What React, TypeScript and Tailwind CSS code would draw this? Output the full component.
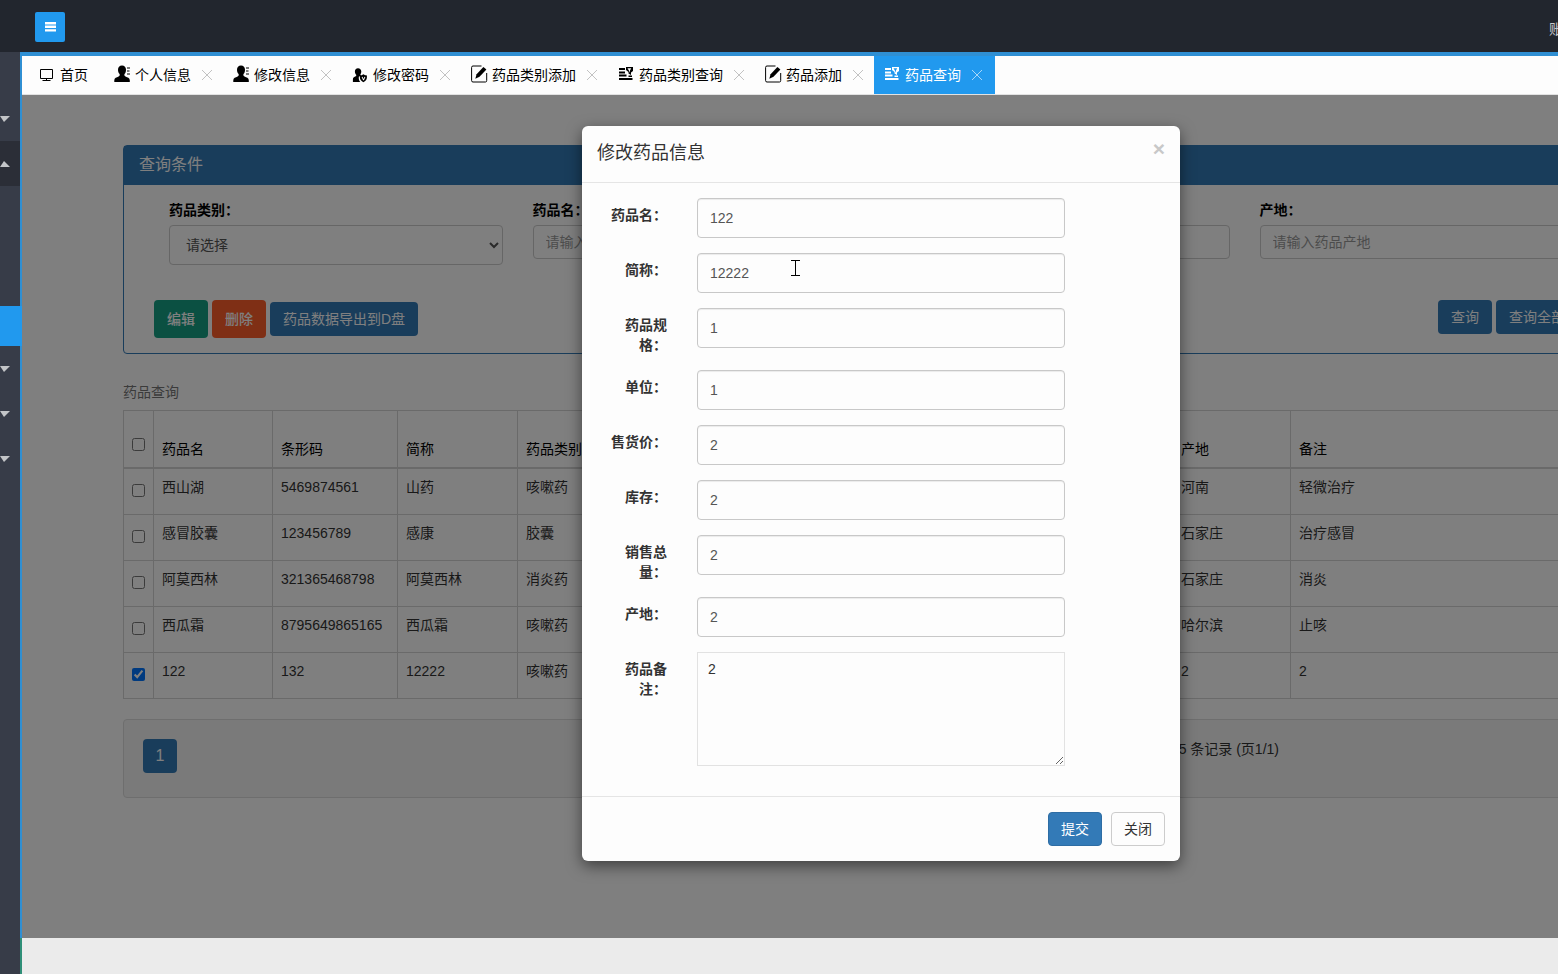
import { useState } from "react";
import type { ReactNode } from "react";

type IconProps = { className?: string };

function MonitorIcon() {
  return (
    <svg width="14" height="14" viewBox="0 0 14 14" fill="none" stroke="currentColor" aria-hidden="true">
      <path d="M.5 1.500h12v9H.5zM6.500 10.500v2M2.500 12.500h8" />
    </svg>
  );
}

function UserIcon({ className }: IconProps) {
  return (
    <svg width="18" height="18" viewBox="0 0 18 18" fill="currentColor" className={className} aria-hidden="true">
      <path d="M8 .5c-2.500 0-4 1.700-4 4.200 0 1.800.6 3.400 1.600 4.400.3 1.200.1 1.900-1 2.400C2.600 12.400.3 13 .3 15.200V17h15.500v-1.800c0-2.200-2.300-2.800-4.300-3.700-1.100-.5-1.300-1.200-1-2.400 1-1 1.500-2.600 1.500-4.400C12 2.200 10.500.5 8 .5z" />
      <path d="M13 2.500h3v1h-3zM13 5.500h2.500v1H13zM13 8.500h3v1h-3z" />
    </svg>
  );
}

function UserShieldIcon({ className }: IconProps) {
  return (
    <svg width="18" height="18" viewBox="0 0 18 18" fill="currentColor" className={className} aria-hidden="true">
      <path d="M6 3.200c-2 0-3.100 1.400-3.100 3.300 0 1.400.5 2.500 1.300 3.300.2 1-.1 1.400-1 1.800C1.900 12.200.9 12.800.9 14.600V17h7.400c-1.300-1.400-1.700-3-1.500-5.300l2.400-1.100c-.7-.3-.9-.7-.7-1.300.5-.7.800-1.700.8-2.800C9.300 4.600 8 3.200 6 3.200z" />
      <path
        fillRule="evenodd"
        d="M11.400 9.300c1.200.9 2.200 1.100 3.500 1.100v2.200c0 2.200-1.400 3.700-3.500 4.600-2.100-.9-3.500-2.400-3.500-4.600v-2.200c1.300 0 2.300-.2 3.500-1.100zM9.600 12l1.500 3.200h.8l1.500-3.200-.9-.3-1 2.200-1-2.200z"
      />
    </svg>
  );
}

function EditIcon({ className }: IconProps) {
  return (
    <svg width="18" height="18" viewBox="0 0 18 18" fill="none" className={className} aria-hidden="true">
      <path
        d="M10.500 1H2Q.6 1 .6 2.400v13.200Q.6 17 2 17h12.500q1.200 0 1.200-1.400V8"
        stroke="currentColor"
      />
      <path d="M12.400 2l3 2.600-6.900 7.200-4.200 2 1.300-4.600z" fill="currentColor" />
    </svg>
  );
}

function ListFilterIcon({ className }: IconProps) {
  return (
    <svg width="18" height="18" viewBox="0 0 18 18" fill="currentColor" className={className} aria-hidden="true">
      <path d="M1 3h6v2H1zM1 6.500h6v2H1zM1 9.500h7.500v2H1zM1 13h13.500v2H1zM10.500 10.500H14V12h-3.500z" />
      <path fillRule="evenodd" d="M8 2h7v4l-2 1.500v2.500l-2.500-1.500V7L8 5zM9.500 3.200l1.500 2.500 1 2V5.500l1.200-2.300z" />
    </svg>
  );
}

function CloseIcon() {
  return (
    <svg width="12" height="12" viewBox="0 0 12 12" stroke="currentColor" aria-hidden="true">
      <path d="M1 1l10 10M11 1L1 11" />
    </svg>
  );
}

const tabs: { label: string; icon: ReactNode; active?: boolean }[] = [
  { label: "个人信息", icon: <UserIcon /> },
  { label: "修改信息", icon: <UserIcon /> },
  { label: "修改密码", icon: <UserShieldIcon /> },
  { label: "药品类别添加", icon: <EditIcon /> },
  { label: "药品类别查询", icon: <ListFilterIcon /> },
  { label: "药品添加", icon: <EditIcon /> },
  { label: "药品查询", icon: <ListFilterIcon />, active: true },
];

const drugs = [
  { name: "西山湖", code: "5469874561", short: "山药", type: "咳嗽药", origin: "河南", remark: "轻微治疗" },
  { name: "感冒胶囊", code: "123456789", short: "感康", type: "胶囊", origin: "石家庄", remark: "治疗感冒" },
  { name: "阿莫西林", code: "321365468798", short: "阿莫西林", type: "消炎药", origin: "石家庄", remark: "消炎" },
  { name: "西瓜霜", code: "8795649865165", short: "西瓜霜", type: "咳嗽药", origin: "哈尔滨", remark: "止咳" },
  { name: "122", code: "132", short: "12222", type: "咳嗽药", origin: "2", remark: "2" },
];

const fields = [
  { id: "name", label: "药品名：", value: "122" },
  { id: "short", label: "简称：", value: "12222" },
  { id: "spec", label: "药品规格：", value: "1" },
  { id: "unit", label: "单位：", value: "1" },
  { id: "price", label: "售货价：", value: "2" },
  { id: "stock", label: "库存：", value: "2" },
  { id: "sales", label: "销售总量：", value: "2" },
  { id: "origin", label: "产地：", value: "2" },
];

function MenuItem({ open = false }: { open?: boolean }) {
  return (
    <button
      type="button"
      aria-label="菜单"
      aria-expanded={open}
      className={`flex h-[45px] w-full items-center ${open ? "bg-[#2b2e37]" : ""}`}
    >
      <svg width="10" height="6" viewBox="0 0 10 6" fill="#c3c5c8" aria-hidden="true">
        <path d={open ? "M0 6h10L4 0z" : "M0 0h10L4 6z"} />
      </svg>
    </button>
  );
}

function Sidebar() {
  return (
    <nav className="w-5 shrink-0 bg-[#373c48]">
      <div className="h-11" />
      <MenuItem />
      <MenuItem open />
      <div className="h-[120px]" />
      <a href="#drugs" aria-label="药品查询" className="relative z-10 -mr-0.5 block h-10 bg-[#2199ee]" />
      <MenuItem />
      <MenuItem />
      <MenuItem />
    </nav>
  );
}

function TabBar() {
  return (
    <div className="flex h-[39px] shrink-0 border-b border-[#e2e2e2] bg-[#fdfdfd] text-black">
      <button type="button" className="flex shrink-0 items-center gap-1.5 pr-4 pl-[18px]">
        <MonitorIcon />
        首页
      </button>
      {tabs.map((tab) => (
        <div
          key={tab.label}
          className={`flex shrink-0 items-center pl-2.5 ${
            tab.active ? "bg-[#2199ee] pr-3 text-white" : "pr-2.5"
          }`}
        >
          <button type="button" className="flex items-center gap-[3px]">
            <span className="-mt-0.5">{tab.icon}</span>
            {tab.label}
          </button>
          <button
            type="button"
            aria-label="关闭标签"
            className={`ml-2.5 ${tab.active ? "text-[#a8d6f8]" : "text-[#c2c2c2]"}`}
          >
            <CloseIcon />
          </button>
        </div>
      ))}
    </div>
  );
}

function SearchPanel() {
  const input =
    "h-[34px] w-full rounded-sm border border-[#ccc] px-3 text-[#555] placeholder:text-[#999]";
  return (
    <section className="rounded border border-[#337ab7]">
      <h3 className="bg-[#337ab7] px-[15px] pt-[9px] pb-2.5 text-base leading-5 text-white">查询条件</h3>
      <form className="px-[30px] pt-[15px] pb-[15px]" onSubmit={(e) => e.preventDefault()}>
        <div className="grid h-[100px] grid-cols-4 items-start">
          <div className="px-[15px]">
            <label htmlFor="q-type" className="mb-[5px] block font-bold text-black">
              药品类别：
            </label>
            <select id="q-type" className="h-10 w-full rounded-sm border border-[#ccc] px-3 text-[#555]">
              <option>请选择</option>
            </select>
          </div>
          <div className="px-[15px]">
            <label htmlFor="q-name" className="mb-[5px] block font-bold text-black">
              药品名：
            </label>
            <input id="q-name" className={input} placeholder="请输入药品名" />
          </div>
          <div className="px-[15px] pt-[25px]">
            <input aria-label="简称" className={input} />
          </div>
          <div className="px-[15px]">
            <label htmlFor="q-origin" className="mb-[5px] block font-bold text-black">
              产地：
            </label>
            <input id="q-origin" className={input} placeholder="请输入药品产地" />
          </div>
        </div>
        <div className="flex items-start gap-1 text-white">
          <button type="button" className="h-[38px] rounded-sm bg-[#16a085] px-[13px] font-medium">
            编辑
          </button>
          <button type="button" className="h-[38px] rounded-sm bg-[#ff5e2b] px-[13px] font-medium">
            删除
          </button>
          <button type="button" className="mt-0.5 h-[34px] rounded-sm bg-[#337ab7] px-[13px]">
            药品数据导出到D盘
          </button>
          <button type="submit" className="ml-auto h-[34px] rounded-sm bg-[#337ab7] px-[13px]">
            查询
          </button>
          <button type="button" className="mr-[30px] h-[34px] rounded-sm bg-[#337ab7] px-[13px]">
            查询全部
          </button>
        </div>
      </form>
    </section>
  );
}

function DrugTable() {
  const cell = "border border-[#d4d4d4] p-2";
  return (
    <table className="w-full table-fixed border-collapse text-left text-[#333]">
      <caption className="pt-7 pb-2 text-left text-[#777]">药品查询</caption>
      <colgroup>
        <col className="w-[30px]" />
        <col className="w-[119px]" />
        <col className="w-[125px]" />
        <col className="w-[120px]" />
        <col className="w-[655px]" />
        <col className="w-[118px]" />
        <col />
      </colgroup>
      <thead>
        <tr className="h-[57px] border-b-2 border-[#d4d4d4] align-bottom text-black">
          <th className={`${cell} pb-4`}>
            <input type="checkbox" aria-label="全选" className="block h-[13px] w-[13px]" />
          </th>
          {["药品名", "条形码", "简称", "药品类别", "产地", "备注"].map((title) => (
            <th key={title} className={`${cell} font-normal`}>
              {title}
            </th>
          ))}
        </tr>
      </thead>
      <tbody>
        {drugs.map((drug) => (
          <tr key={drug.code} className="h-[46px] align-top first:h-[47px]">
            <td className={`${cell} pt-[15px]`}>
              <input
                type="checkbox"
                aria-label={drug.name}
                defaultChecked={drug.name === "122"}
                className="block h-[13px] w-[13px]"
              />
            </td>
            <td className={cell}>{drug.name}</td>
            <td className={cell}>{drug.code}</td>
            <td className={cell}>{drug.short}</td>
            <td className={cell}>{drug.type}</td>
            <td className={cell}>{drug.origin}</td>
            <td className={cell}>{drug.remark}</td>
          </tr>
        ))}
      </tbody>
    </table>
  );
}

function Pager() {
  return (
    <div className="mt-5 flex h-[79px] items-start rounded-sm border border-[#dcdcdc] bg-[#f5f5f5] px-[19px] pt-[19px] text-[#333]">
      <button type="button" className="h-[34px] w-[34px] rounded-sm bg-[#337ab7] text-base text-white">
        1
      </button>
      <p className="mr-[340px] ml-auto">5 条记录 (页1/1)</p>
    </div>
  );
}

function EditDialog() {
  const [values, setValues] = useState(() => fields.map((field) => field.value));
  // 69px of text width, so that five-character labels break onto two lines
  const label = "w-[100px] pt-[7px] pr-[15px] pl-4 text-right font-bold";

  return (
    <div
      role="dialog"
      aria-labelledby="dialog-title"
      className="mx-auto mt-[31px] w-[598px] rounded-md bg-[#fdfdfd] text-[#333] shadow-[0_5px_15px_rgba(0,0,0,0.5)]"
    >
      <div className="flex items-start justify-between border-b border-[#e5e5e5] px-[15px] pt-[15px] pb-4">
        <h4 id="dialog-title" className="text-lg leading-[25px]">
          修改药品信息
        </h4>
        <button type="button" aria-label="关闭窗口" className="-mt-0.5 text-[21px] leading-5 font-bold text-[#c8c8c8]">
          ×
        </button>
      </div>

      <form className="space-y-[15px] pt-[15px] pb-[30px]">
        {fields.map((field, i) => (
          <div key={field.id} className="flex">
            <label htmlFor={field.id} className={label}>
              {field.label}
            </label>
            <div className="relative w-[398px] px-[15px]">
              <input
                id={field.id}
                value={values[i]}
                onChange={(e) => setValues(values.map((v, n) => (n === i ? e.target.value : v)))}
                className="h-10 w-full rounded-sm border border-[#c8c8c8] px-3 text-[#555] shadow-[inset_0_1px_1px_rgba(0,0,0,0.075)]"
              />
              {field.id === "short" && (
                <svg
                  className="pointer-events-none absolute top-[7px] left-[109px]"
                  width="9"
                  height="16"
                  viewBox="0 0 9 16"
                  stroke="#000"
                  aria-hidden="true"
                >
                  <path d="M0 .5h9M4.500 0v16M0 15.500h9" />
                </svg>
              )}
            </div>
          </div>
        ))}
        <div className="flex">
          <label htmlFor="remark" className={label}>
            药品备注：
          </label>
          <div className="w-[398px] px-[15px]">
            <textarea
              id="remark"
              defaultValue="2"
              className="block h-[114px] w-full border border-[#e2e2e2] px-2.5 py-1.5"
            />
          </div>
        </div>
      </form>

      <div className="flex justify-end gap-[9px] border-t border-[#e5e5e5] p-[15px]">
        <button type="button" className="h-[34px] rounded-sm border border-[#2e6da4] bg-[#337ab7] px-3 text-white">
          提交
        </button>
        <button type="button" className="h-[34px] rounded-sm border border-[#ccc] px-3">
          关闭
        </button>
      </div>
    </div>
  );
}

export default function App() {
  return (
    <div className="flex h-screen flex-col overflow-hidden font-['Liberation_Sans','Noto_Sans_CJK_SC',sans-serif] text-sm leading-5">
      <header className="flex h-[52px] shrink-0 items-start bg-[#22262e] pt-3 pl-[35px]">
        <button
          type="button"
          aria-label="切换菜单"
          className="flex h-[30px] w-[30px] items-center justify-center rounded-xs bg-[#2199ee]"
        >
          <svg width="11" height="10" viewBox="0 0 11 10" fill="#fff" aria-hidden="true">
            <path d="M0 0h11v2.400H0zM0 3.600h11v2.400H0zM0 7.200h11v2.400H0z" />
          </svg>
        </button>
        <span className="ml-auto w-[9px] overflow-hidden pt-[7px] whitespace-nowrap text-[#c8c9cb]">账</span>
      </header>

      <div className="flex min-h-0 flex-1">
        <Sidebar />
        <main className="flex min-w-0 flex-1 flex-col border-t-4 border-[#2f8fd3]">
          <div className="flex min-h-0 flex-1 flex-col border-l-2 border-[#2f8fd3]">
            <TabBar />
            <div className="min-h-0 flex-1 overflow-hidden bg-white">
              {/* the inner page is wider than the window, its right part is cut off */}
              <div className="relative h-full w-[calc(100%+182px)]">
                <div className="px-[101px] pt-[50px]">
                  <SearchPanel />
                  <DrugTable />
                  <Pager />
                </div>
                <div className="absolute inset-0 bg-black/50">
                  <EditDialog />
                </div>
              </div>
            </div>
          </div>
          <footer className="h-9 shrink-0 border-l-2 border-[#2f8f78] bg-[#ebebeb]" />
        </main>
      </div>
    </div>
  );
}
